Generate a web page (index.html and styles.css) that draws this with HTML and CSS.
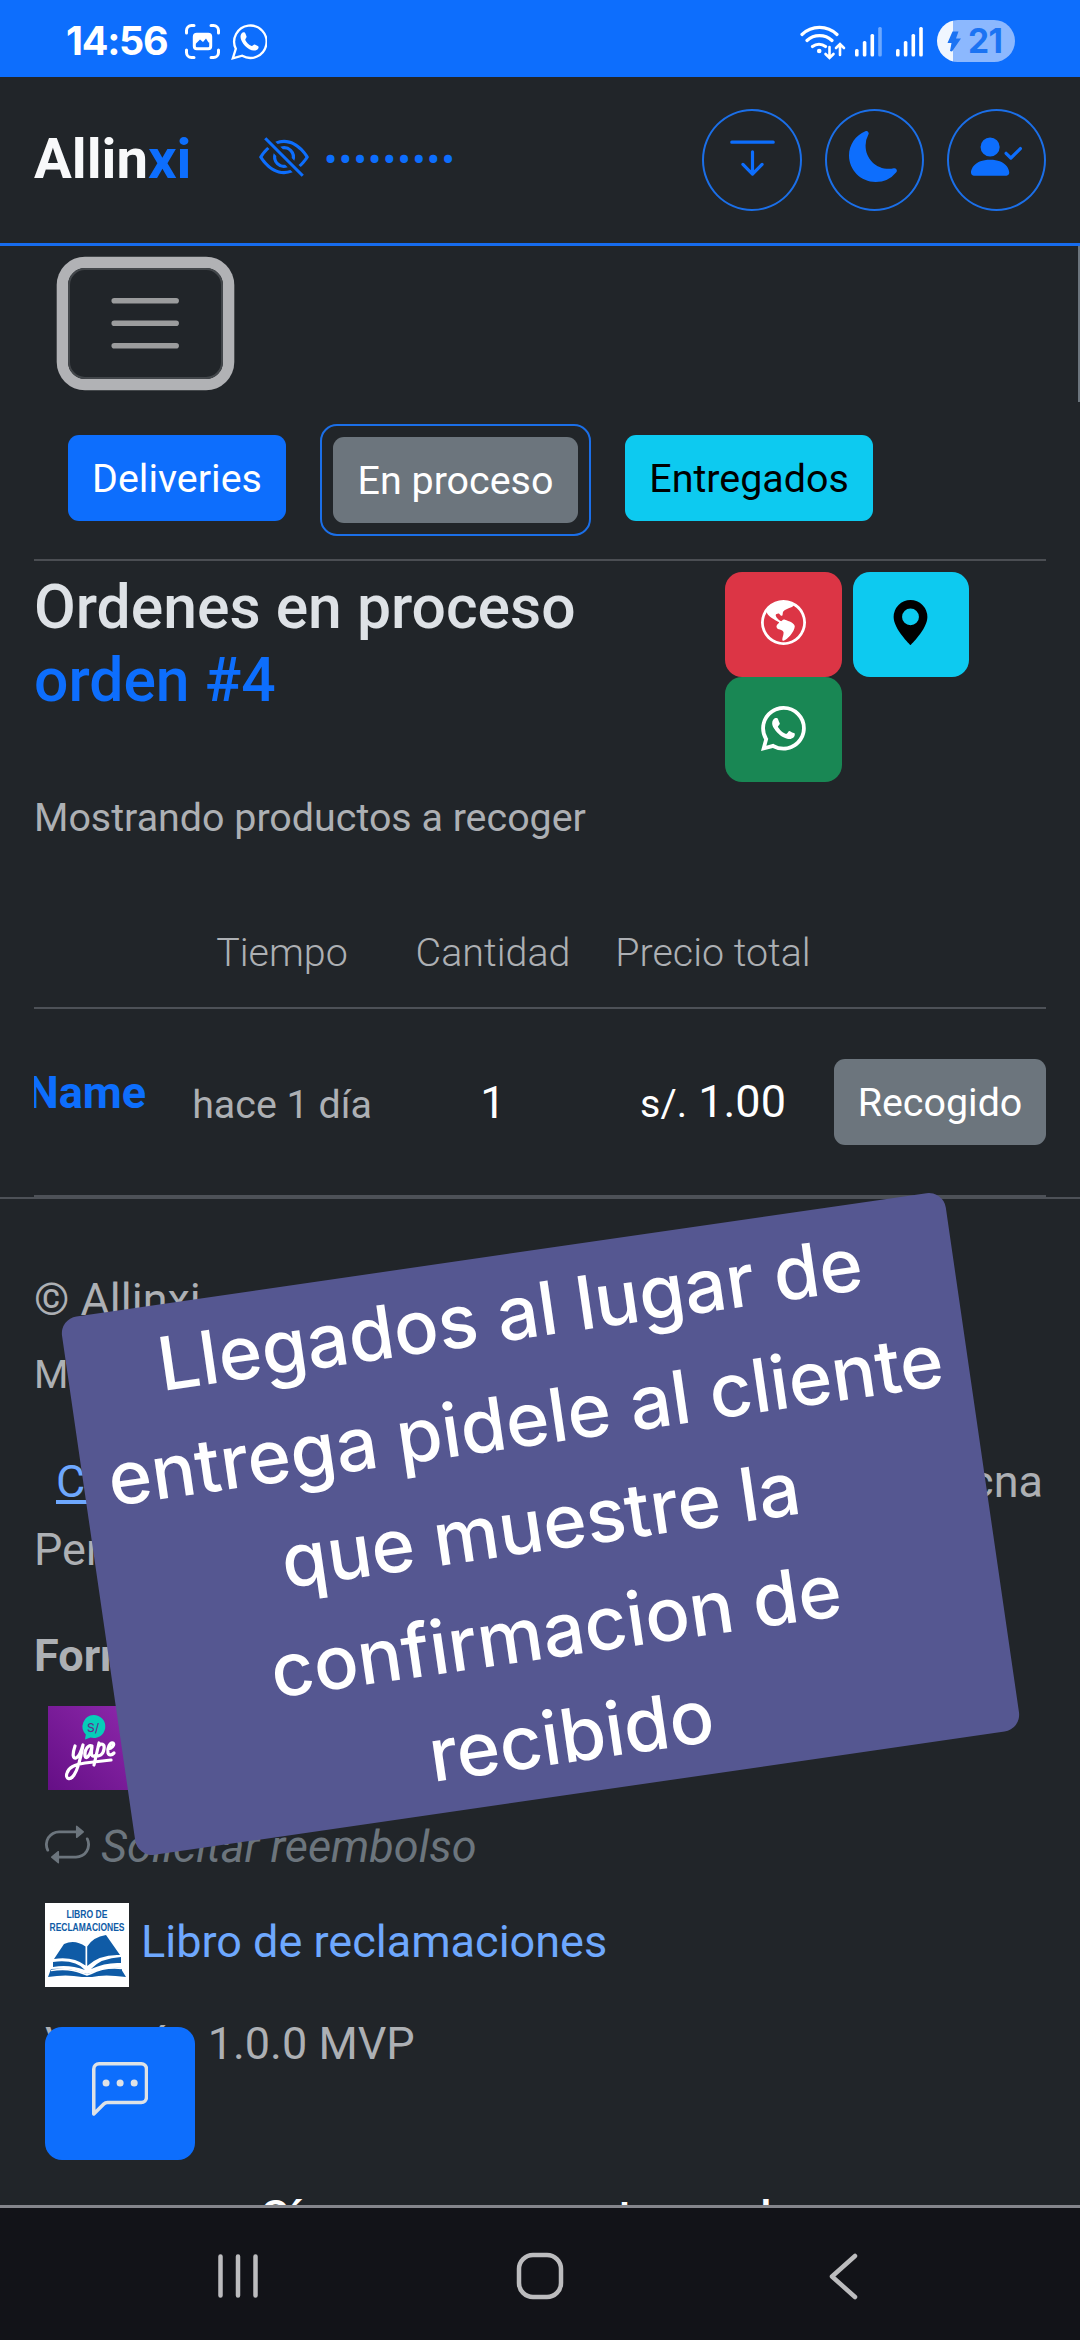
FILE: index.html
```html
<!DOCTYPE html>
<html lang="es">
<head>
<meta charset="utf-8">
<title>Allinxi</title>
<link rel="stylesheet" href="styles.css">
</head>
<body>
<svg class="defs" aria-hidden="true">
  <symbol id="whatsapp" viewBox="0 0 16 16"><path d="M13.601 2.326A7.85 7.85 0 0 0 7.994 0C3.627 0 .068 3.558.064 7.926c0 1.399.366 2.76 1.057 3.965L0 16l4.204-1.102a7.9 7.9 0 0 0 3.79.965h.004c4.368 0 7.926-3.558 7.93-7.93A7.9 7.9 0 0 0 13.6 2.326zM7.994 14.521a6.6 6.6 0 0 1-3.356-.92l-.24-.144-2.494.654.666-2.433-.156-.251a6.56 6.56 0 0 1-1.007-3.505c0-3.626 2.957-6.584 6.591-6.584a6.56 6.56 0 0 1 4.66 1.931 6.56 6.56 0 0 1 1.928 4.66c-.004 3.639-2.961 6.592-6.592 6.592m3.615-4.934c-.197-.099-1.17-.578-1.353-.646-.182-.065-.315-.099-.445.099-.133.197-.513.646-.627.775-.114.133-.232.148-.43.05-.197-.1-.836-.308-1.592-.985-.59-.525-.985-1.175-1.103-1.372-.114-.198-.011-.304.088-.403.087-.088.197-.232.296-.346.1-.114.133-.198.198-.33.065-.134.034-.248-.015-.347-.05-.099-.445-1.076-.612-1.47-.16-.389-.323-.335-.445-.34-.114-.007-.247-.007-.38-.007a.73.73 0 0 0-.529.247c-.182.198-.691.677-.691 1.654s.71 1.916.81 2.049c.098.133 1.394 2.132 3.383 2.992.47.205.84.326 1.129.418.475.152.904.129 1.246.08.38-.058 1.171-.48 1.338-.943.164-.464.164-.86.114-.992-.049-.133-.182-.198-.38-.297"/></symbol>
</svg>

<div class="status">
  <span class="clock">14:56</span>
  <svg class="st-shot" viewBox="0 0 35 35" fill="none" stroke="#fff" stroke-width="3" stroke-linecap="round"><path d="M1.5 9V6.500a5 5 0 0 1 5-5H9M26 1.500h2.500a5 5 0 0 1 5 5V9M33.500 26v2.500a5 5 0 0 1-5 5H26M9 33.500H6.500a5 5 0 0 1-5-5V26"/><rect x="9.300" y="10.300" width="16.400" height="14.400" rx="2.500"/><path d="M9.500 10v11l2.500-2.500 3-3 3 2.500 3-3.500 2.500 4H26V10z" fill="#fff" stroke="none"/></svg>
  <svg class="st-wa" viewBox="0 0 36 37"><path d="M4.800 25.800A16.200 16.200 0 1 1 11.200 32.700L1.800 35.300z" fill="none" stroke="#fff" stroke-width="2.300"/><path d="M10.500 10.500c1.500-1.800 3.300-1.500 4 .2l1 2.600c.5 1.300-1.500 2.700-1.200 3.700 1 2.500 3.500 5 6.300 6 1 .3 2-1.700 3.200-1.400l3 1.300c1.400.6 1 3-1.200 4-3.600 1.700-8-.4-11.500-4-3.800-3.900-6-9-3.600-12.400z" fill="#fff"/></svg>
  <svg class="st-wifi" viewBox="0 0 46 36" fill="none" stroke="#fff" stroke-width="3.200" stroke-linecap="round"><path d="M2 10.500a25 25 0 0 1 35 0M7 16.500a18.500 18.500 0 0 1 25 0M12.500 22.500a10.500 10.500 0 0 1 13 0"/><circle cx="19.200" cy="27" r="2.300" fill="#fff" stroke="none"/><path d="M29.500 23v10M25.500 30l4 4 4-4M40 31V21M36 24l4-4 4 4" stroke-width="2.600"/></svg>
  <svg class="st-sig" viewBox="0 0 27 30" fill="#fff"><rect y="22" width="3.600" height="7.500" rx="1.500"/><rect x="7.800" y="14" width="3.600" height="15.500" rx="1.500"/><rect x="15.500" y="7" width="3.600" height="22.500" rx="1.500"/><rect x="23.200" width="3.600" height="29.500" rx="1.500" opacity=".4"/></svg>
  <svg class="st-sig two" viewBox="0 0 27 30" fill="#fff"><rect y="22" width="3.600" height="7.500" rx="1.500"/><rect x="7.800" y="14" width="3.600" height="15.500" rx="1.500"/><rect x="15.500" y="7" width="3.600" height="22.500" rx="1.500"/><rect x="23.200" width="3.600" height="29.500" rx="1.500"/></svg>
  <div class="battery"><svg viewBox="0 0 14 21"><path d="M5.500.5h6L9 7.500h5L5 20.500 3 20l1.500-8H.5z" fill="#1b73f3"/></svg><span>21</span></div>
</div>

<header class="top">
  <div class="brand">Allin<span>xi</span></div>
  <svg class="eye" viewBox="0 0 16 16"><path d="M13.359 11.238C15.06 9.720 16 8 16 8s-3-5.500-8-5.500a7 7 0 0 0-2.790.588l.770.771A6 6 0 0 1 8 3.500c2.120 0 3.879 1.168 5.168 2.457A13 13 0 0 1 14.828 8q-.086.130-.195.288c-.335.480-.830 1.120-1.465 1.755q-.247.248-.517.486z"/><path d="M11.297 9.176a3.500 3.500 0 0 0-4.474-4.474l.823.823a2.500 2.500 0 0 1 2.829 2.829zm-2.943 1.299.822.822a3.500 3.500 0 0 1-4.474-4.474l.823.823a2.500 2.500 0 0 0 2.829 2.829"/><path d="M3.350 5.470q-.270.240-.518.487A13 13 0 0 0 1.172 8l.195.288c.335.480.830 1.120 1.465 1.755C4.121 11.332 5.881 12.500 8 12.500c.716 0 1.390-.133 2.020-.360l.770.772A7 7 0 0 1 8 13.500C3 13.500 0 8 0 8s.939-1.721 2.641-3.238l.708.709zm10.296 8.884-12-12 .708-.708 12 12z"/></svg>
  <span class="dots">•••••••••</span>
  <div class="rounds">
    <button class="round first"><svg viewBox="0 0 16 16"><path d="M1 3.500a.5.5 0 0 1 .5-.5h13a.5.5 0 0 1 0 1h-13a.5.5 0 0 1-.5-.5M8 6a.5.5 0 0 1 .5.5v5.793l2.146-2.147a.5.5 0 0 1 .708.708l-3 3a.5.5 0 0 1-.708 0l-3-3a.5.5 0 0 1 .708-.708L7.500 12.293V6.500A.5.5 0 0 1 8 6"/></svg></button>
    <button class="round"><svg viewBox="0 0 16 16"><path d="M6 .278a.77.77 0 0 1 .08.858 7.200 7.200 0 0 0-.878 3.460c0 4.021 3.278 7.277 7.318 7.277q.792-.001 1.533-.160a.79.79 0 0 1 .810.316.73.73 0 0 1-.031.893A8.350 8.350 0 0 1 8.344 16C3.734 16 0 12.286 0 7.710 0 4.266 2.114 1.312 5.124.060A.75.75 0 0 1 6 .278"/></svg></button>
    <button class="round"><svg viewBox="0 0 16 16"><path d="M15.854 5.146a.5.5 0 0 1 0 .708l-3 3a.5.5 0 0 1-.708 0l-1.500-1.500a.5.5 0 0 1 .708-.708L12.500 7.793l2.646-2.647a.5.5 0 0 1 .708 0"/><path d="M1 14s-1 0-1-1 1-4 6-4 6 3 6 4-1 1-1 1zm5-6a3 3 0 1 0 0-6 3 3 0 0 0 0 6"/></svg></button>
  </div>
</header>

<div class="page">
  <div class="thumb"></div>
  <main>
    <button class="toggler"><svg viewBox="0 0 30 30"><path d="M4 7h22M4 15h22M4 23h22" fill="none" stroke="#9b9c9d" stroke-width="2" stroke-linecap="round"/></svg></button>
    <nav class="tabs">
      <a class="btn blue">Deliveries</a>
      <div class="current"><a class="btn gray">En proceso</a></div>
      <a class="btn cyan">Entregados</a>
    </nav>
    <div class="rule"></div>
    <section class="order">
      <h4>Ordenes en proceso<br><span>orden #4</span></h4>
      <div class="actions">
        <a class="act red"><svg viewBox="0 0 16 16"><path d="M8 0a8 8 0 1 0 0 16A8 8 0 0 0 8 0M2.040 4.326c.325 1.329 2.532 2.540 3.717 3.190.480.263.793.434.743.484q-.121.120-.242.234c-.416.396-.787.749-.758 1.266.035.634.618.824 1.214 1.017.577.188 1.168.380 1.286.983.082.417-.075.988-.220 1.520-.215.782-.406 1.480.220 1.480 1.500-.500 3.798-3.186 4-5 .138-1.243-2-2-3.500-2.500-.478-.160-.755.081-.990.284-.172.150-.322.279-.510.216-.445-.148-2.500-2-1.500-2.500.780-.390.952-.171 1.227.182.078.099.163.208.273.318.609.304.662-.132.723-.633.039-.322.081-.671.277-.867.434-.434 1.265-.791 2.028-1.120.712-.306 1.365-.587 1.579-.880A7 7 0 1 1 2.040 4.327Z"/></svg></a>
        <a class="act cyan"><svg viewBox="0 0 16 16"><path d="M8 16s6-5.686 6-10A6 6 0 0 0 2 6c0 4.314 6 10 6 10m0-7a3 3 0 1 1 0-6 3 3 0 0 1 0 6"/></svg></a>
        <a class="act green"><svg><use href="#whatsapp"/></svg></a>
      </div>
    </section>
    <p class="showing">Mostrando productos a recoger</p>
    <div class="grid head"><span></span><span>Tiempo</span><span>Cantidad</span><span>Precio total</span><span></span></div>
    <div class="grid row">
      <b class="name">Name</b>
      <span class="ago">hace 1 día</span>
      <span class="num">1</span>
      <span class="num"><small>s/.</small> 1.00</span>
      <a class="btn gray">Recogido</a>
    </div>
  </main>

  <footer>
    <p class="copy">© Allinxi</p>
    <p class="small">M</p>
    <p class="address"><a>Contacto</a><span>Tacna</span></p>
    <p class="country">Perú</p>
    <p class="pay"><b>Formas de pago</b></p>
    <svg class="yape" viewBox="0 0 84 84">
      <defs><linearGradient id="yg" x1="0" y1="1" x2="1" y2="0"><stop offset="0" stop-color="#650f86"/><stop offset="1" stop-color="#8d28ab"/></linearGradient></defs>
      <rect width="84" height="84" fill="url(#yg)"/>
      <path d="M45.500 9a11.500 11.500 0 1 1-3 22.500L37 33.500l.8-5A11.500 11.500 0 0 1 45.500 9z" fill="#07cdb9"/>
      <text x="39" y="25.500" font-family="Inter, sans-serif" font-size="12" font-weight="500" fill="#60318e">S/</text>
      <g fill="none" stroke="#fff" stroke-width="3.200" stroke-linecap="round" stroke-linejoin="round"><path d="M27 40c-3 9-2 13 1 12 3-1 5-6 7-13-2 11-4 23-9 30-4 6-9 4-7-2 2-7 10-9 18-10l26-3"/><path d="M44 40c-4-2-8 5-7 10 1 4 5 0 7-9-1 6-1 10 2 9M51 37l-5 22M50 41c3-5 7-3 6 2-1 6-5 8-8 6M60 43c4-1 7-4 5-6-3-1-6 5-5 10 1 3 4 2 6 0"/></g>
    </svg>
    <p class="refund"><svg viewBox="0 0 16 16"><path d="M11 5.466V4H5a4 4 0 0 0-3.584 5.777.5.5 0 1 1-.896.446A5 5 0 0 1 5 3h6V1.534a.25.25 0 0 1 .410-.192l2.360 1.966c.120.100.120.284 0 .384l-2.360 1.966a.25.25 0 0 1-.410-.192m3.810.086a.5.5 0 0 1 .670.225A5 5 0 0 1 11 13H5v1.466a.25.25 0 0 1-.410.192l-2.360-1.966a.25.25 0 0 1 0-.384l2.360-1.966a.25.25 0 0 1 .410.192V12h6a4 4 0 0 0 3.585-5.777.5.5 0 0 1 .225-.670Z"/></svg><i>Solicitar reembolso</i></p>
    <p class="book">
      <svg viewBox="0 0 84 84"><rect width="84" height="84" fill="#fff"/>
        <g fill="#0f5ba6"><text x="42" y="14.800" text-anchor="middle" textLength="41" lengthAdjust="spacingAndGlyphs" font-family="Liberation Sans, sans-serif" font-size="11.500" font-weight="700">LIBRO DE</text><text x="42" y="28" text-anchor="middle" textLength="75" lengthAdjust="spacingAndGlyphs" font-family="Liberation Sans, sans-serif" font-size="11.500" font-weight="700">RECLAMACIONES</text>
        <path d="M9 56 19 41q11-5 21.500 2.500v19Q28 53 9 56zM42.200 63V43.500Q48 34 61 32l14 20q-20-1-32.800 11z"/><path d="M8 59q22-3 32 8-16-6-32-3zM76 54q-20 1-30 12 15-7 30-6z"/><path d="M6 66q20-1 32 4l4 1 4-1q14-6 31-5v2.500l4 6.500q-22-3-34 0H37q-16-3-34 0z"/></g>
        <path d="M6 67.500q18-3 32 3l4 1.500 4-1.500q14-7 31-5" fill="none" stroke="#fff" stroke-width="1.600"/></svg>
      <a>Libro de reclamaciones</a>
    </p>
    <p class="version">Versión 1.0.0 MVP</p>
    <h5>Síguenos en nuestras redes</h5>
  </footer>

  <button class="chat"><svg viewBox="0 0 16 16"><path d="M14 1a1 1 0 0 1 1 1v8a1 1 0 0 1-1 1H4.414A2 2 0 0 0 3 11.586l-2 2V2a1 1 0 0 1 1-1zM2 0a2 2 0 0 0-2 2v12.793a.5.5 0 0 0 .854.353l2.853-2.853A1 1 0 0 1 4.414 12H14a2 2 0 0 0 2-2V2a2 2 0 0 0-2-2z"/><path d="M5 6a1 1 0 1 1-2 0 1 1 0 0 1 2 0m4 0a1 1 0 1 1-2 0 1 1 0 0 1 2 0m4 0a1 1 0 1 1-2 0 1 1 0 0 1 2 0"/></svg></button>
</div>

<div class="sysnav">
  <svg viewBox="0 0 42 46"><path d="M3.500 3.500v39M21 3.500v39M38.500 3.500v39"/></svg>
  <svg viewBox="0 0 48 48"><rect x="3" y="3" width="42" height="42" rx="14"/></svg>
  <svg viewBox="0 0 30 48"><path d="M27 4 4 24.500 27 45"/></svg>
</div>

<div class="note">Llegados al lugar de<br>entrega pidele al cliente<br>que muestre la<br>confirmacion de<br>recibido</div>
</body>
</html>
```
FILE: styles.css
```css
* { box-sizing: border-box; }
body { margin: 0; width: 1080px; height: 2340px; overflow: hidden; position: relative; background: #212529; font-family: Roboto, sans-serif; font-size: 45px; line-height: 67.5px; color: #adb0b4; display: flex; flex-direction: column; }
p, h4, h5 { margin: 0; font-weight: 400; }
button { padding: 0; background: none; font: inherit; }
svg { display: block; flex: none; }
a, span, b { white-space: nowrap; }
.defs { position: absolute; width: 0; height: 0; }

/* system status bar */
.status { height: 77px; flex: none; background: #0d6efd; display: flex; align-items: flex-start; padding: 0 65px 0 66px; color: #fff; }
.clock { width: 119px; font: 700 39.500px/82px Inter, sans-serif; letter-spacing: -1.300px; }
.st-shot { width: 35px; height: 35px; margin-top: 24px; }
.st-wa { width: 36px; height: 37px; margin: 23px 0 0 11px; }
.st-wifi { width: 46px; height: 36px; margin: 24px 0 0 auto; }
.st-sig { width: 27px; height: 30px; margin: 27px 0 0 9px; }
.st-sig.two { margin-left: 14px; }
.battery { width: 78px; height: 42px; margin: 20px 0 0 14px; border-radius: 21px; background: linear-gradient(90deg, #f0f6ff 16px, #8cb8fe 16px); display: flex; align-items: center; padding-left: 10px; color: #1b73f3; font: 700 33.500px/42px Inter, sans-serif; }
.battery svg { width: 14px; height: 21px; margin-right: 7px; }
.battery span { letter-spacing: -.5px; }

/* app header */
.top { height: 169px; flex: none; border-bottom: 3px solid #176cee; display: flex; align-items: center; padding: 0 34px; }
.brand { width: 225px; font-size: 56.250px; font-weight: 700; color: #f8f9fa; }
.brand span { color: #0d6efd; }
.eye { width: 50px; height: 50px; margin-bottom: 6px; fill: #0d6efd; }
.dots { margin-left: 15px; color: #0d6efd; font-size: 39.400px; letter-spacing: 1.400px; }
.rounds { margin-left: auto; margin-bottom: 6px; display: flex; gap: 23px; padding-top: 6px; }
.round { width: 99px; height: 102px; border: 2px solid #1b6fe8; border-radius: 50%; display: flex; justify-content: center; padding-top: 20px; }
.round.first { width: 100px; }
.round svg { width: 51px; height: 51px; fill: #0d6efd; }

/* scrolling page */
.page { height: 1959px; flex: none; overflow: hidden; position: relative; }
.thumb { position: absolute; right: 0; top: 0; width: 2px; height: 156px; background: #6c757d; }
main { padding: 22px 34px 0; }
.toggler { display: flex; align-items: center; justify-content: center; width: 155px; height: 111px; margin-left: 34px; border: 2px solid #42464a; border-radius: 17px; box-shadow: 0 0 0 11.300px #b1b2b5; }
.toggler svg { width: 84.400px; height: 84.400px; }
.tabs { display: flex; align-items: flex-start; gap: 34px; padding-left: 34px; margin-top: 45px; height: 112px; }
.btn { display: block; height: 86px; margin-top: 11px; border-radius: 11px; font-size: 39.400px; line-height: 88px; text-align: center; color: #fff; }
.tabs .btn { width: 218px; }
.btn.blue { background: #0d6efd; }
.btn.gray { background: #6c757d; }
.tabs .btn.cyan { background: #0dcaf0; color: #000; width: 248px; }
.current { width: 271px; height: 112px; border: 2px solid #1b6fe8; border-radius: 17px; padding-left: 11px; }
.current .btn { width: 245px; }
.rule { height: 2px; margin-top: 23px; background: #4b4e53; }
.order { display: flex; height: 211px; margin-top: 10px; }
h4 { width: 691px; font-size: 60.600px; line-height: 73px; font-weight: 500; color: #dee2e6; }
h4 span { color: #0d6efd; }
.actions { width: 290px; display: flex; flex-wrap: wrap; align-content: flex-start; column-gap: 11px; margin-top: 1px; }
.act { width: 116.500px; height: 105px; border-radius: 17px; display: flex; justify-content: center; padding-top: 28px; }
.act svg { width: 45px; height: 45px; fill: #fff; }
.act.red { background: #dc3545; }
.act.cyan { background: #0dcaf0; }
.act.cyan svg { fill: #000; }
.act.green { background: #198754; padding-top: 29px; }
.showing { margin-top: 6px; font-size: 39.400px; line-height: 59px; }
.grid { display: grid; grid-template-columns: 142px 212px 210px 230px 218px; text-align: center; }
.head { margin-top: 76px; height: 86px; font-size: 39.400px; line-height: 59px; font-weight: 300; border-bottom: 2px solid #4d5157; }
.row { height: 188px; align-items: center; border-bottom: 2px solid #4d5157; }
.name { display: flex; justify-content: flex-end; overflow: hidden; padding-right: 30px; margin-bottom: 19px; color: #0d6efd; }
.ago { font-size: 39.400px; padding-top: 5px; }
.num { color: #fff; padding-top: 2px; }
.num small { font-size: 39.400px; }
.row .btn { width: 212px; margin: 0 0 0 6px; line-height: 88px; }

/* footer */
footer { border-top: 2px solid #4d5157; padding: 67px 34px 0; }
.small { margin-top: 11px; font-size: 39.400px; line-height: 59px; }
.address { margin-top: 44px; display: flex; justify-content: space-between; padding: 0 3px 0 22px; }
.address a { color: #6ea8fe; text-decoration: underline; }
.country { margin-top: 1px; }
.pay { margin-top: 38px; }
.yape { width: 84px; height: 84px; margin: 17px 0 0 14px; }
.refund { display: flex; margin: 23px 0 0 11px; color: #6c757d; }
.refund svg { width: 45px; height: 45px; margin: 9px 11px 0 0; fill: #6c757d; }
.book { display: flex; margin: 22px 0 0 11px; }
.book svg { width: 84px; height: 84px; margin-right: 12px; }
.book a { color: #6ea8fe; padding-top: 5px; }
.version { margin: 23px 0 0 11px; }
h5 { margin-top: 111px; text-align: center; font-size: 45px; line-height: 58px; font-weight: 500; color: #fff; }

.chat { position: absolute; left: 45px; bottom: 45px; width: 150px; height: 133px; border: 0; border-radius: 17px; background: #0d6efd; display: flex; justify-content: center; padding-top: 35px; }
.chat svg { width: 56.250px; height: 56.250px; fill: #dee2e6; }

/* system navigation */
.sysnav { height: 135px; flex: none; background: #121318; border-top: 3px solid #84858b; display: flex; align-items: flex-start; padding: 44px 0 0 217px; }
.sysnav svg { height: 48px; fill: none; stroke: #bcbcbe; stroke-width: 4.500; stroke-linecap: round; stroke-linejoin: round; }
.sysnav svg:nth-child(1) { width: 42px; height: 46px; margin-top: 1px; }
.sysnav svg:nth-child(2) { width: 48px; margin-left: 257px; }
.sysnav svg:nth-child(3) { width: 30px; margin-left: 264px; }

/* rotated caption over the page */
.note { position: absolute; left: 94px; top: 1252px; width: 893px; height: 544px; padding-top: 6px; border-radius: 17px; background: #555791; transform: rotate(-8.250deg); color: #fff; font: 500 74px/106.500px Inter, sans-serif; text-align: center; white-space: nowrap; }
```
